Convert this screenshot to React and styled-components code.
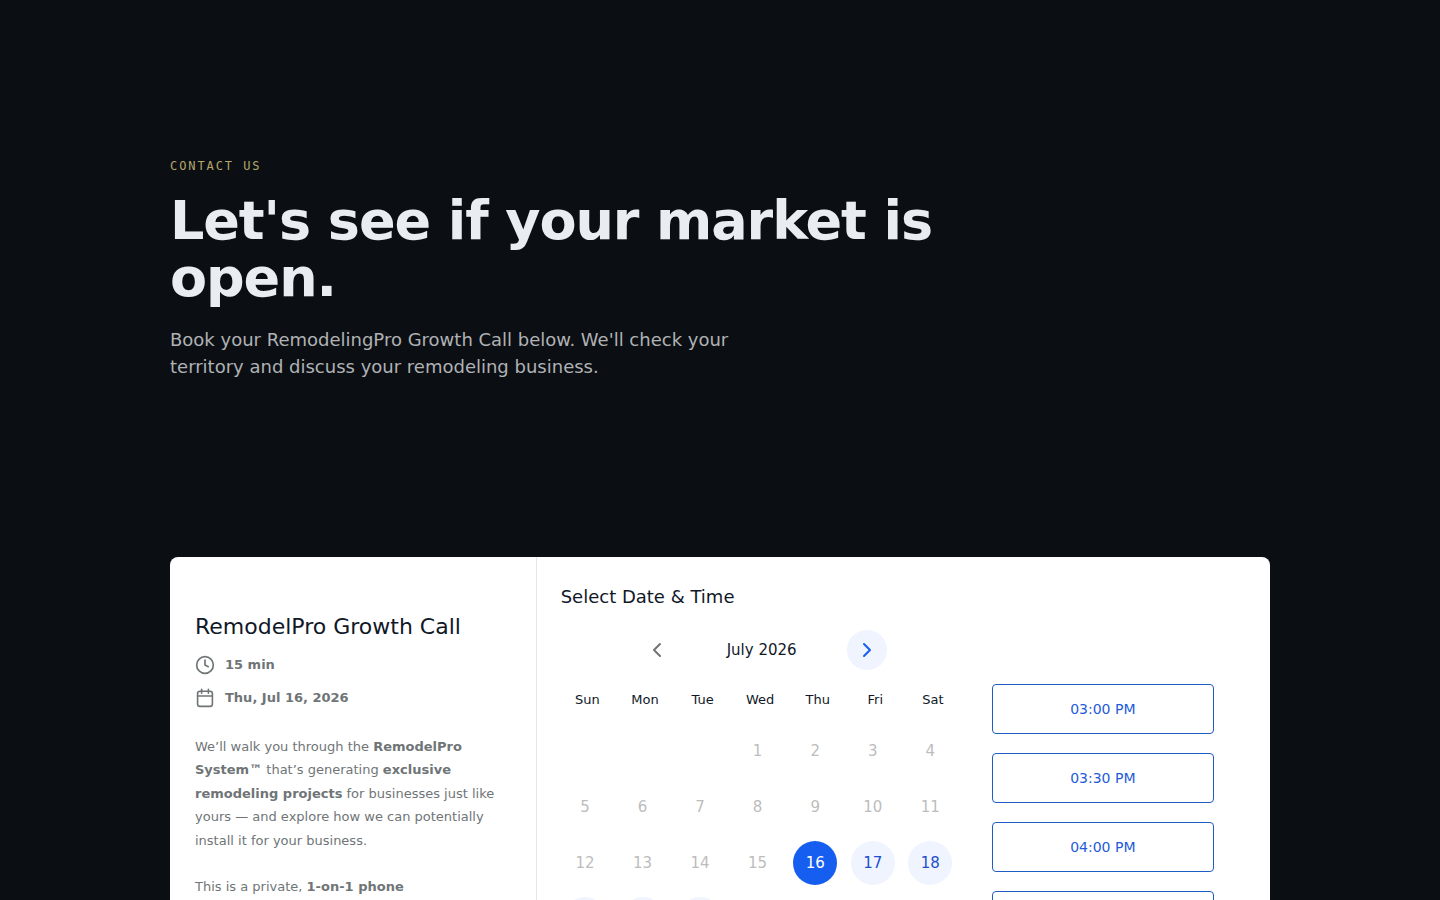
import { useState } from "react"
import styled, { createGlobalStyle } from "styled-components"
import { Clock, ChevronLeft, ChevronRight } from "lucide-react"

const weekdays = ["Sun", "Mon", "Tue", "Wed", "Thu", "Fri", "Sat"]

const weeks = [
    [null, null, null, 1, 2, 3, 4],
    [5, 6, 7, 8, 9, 10, 11],
    [12, 13, 14, 15, 16, 17, 18],
    [19, 20, 21, 22, 23, 24, 25],
    [26, 27, 28, 29, 30, 31, null],
]

const availableDays = [16, 17, 18, 19, 20, 21]

const times = ["03:00 PM", "03:30 PM", "04:00 PM", "04:30 PM", "05:00 PM"]

export default function Contact() {

    const [selected, setSelected] = useState(16)

    return (
        <Page>
            <GlobalStyle />
            <Hero>
                <Eyebrow>CONTACT US</Eyebrow>
                <Title>Let's see if your market is open.</Title>
                <Lead>
                    Book your RemodelingPro Growth Call below. We'll check your
                    territory and discuss your remodeling business.
                </Lead>
            </Hero>

            <Booking>
                <Details>
                    <EventName>RemodelPro Growth Call</EventName>
                    <Meta>
                        <Clock size={20} strokeWidth={2} />
                        15 min
                    </Meta>
                    <Meta>
                        <CalendarIcon />
                        Thu, Jul 16, 2026
                    </Meta>
                    <Description>
                        <p>
                            We’ll walk you through the <strong>RemodelPro System™</strong> that’s
                            generating <strong>exclusive remodeling projects</strong> for businesses
                            just like yours — and explore how we can potentially install it for
                            your business.
                        </p>
                        <p>
                            This is a private, <strong>1-on-1 phone</strong>
                        </p>
                    </Description>
                </Details>

                <Picker>
                    <PickerTitle>Select Date &amp; Time</PickerTitle>
                    <Columns>
                        <div>
                            <MonthBar>
                                <MonthButton aria-label="Previous month">
                                    <ChevronLeft size={24} />
                                </MonthButton>
                                <Month>July 2026</Month>
                                <MonthButton aria-label="Next month" $active>
                                    <ChevronRight size={24} />
                                </MonthButton>
                            </MonthBar>
                            <Days>
                                <thead>
                                    <tr>
                                        {weekdays.map(day => <th key={day} scope="col">{day}</th>)}
                                    </tr>
                                </thead>
                                <tbody>
                                    {weeks.map((week, i) => (
                                        <tr key={i}>
                                            {week.map((day, j) => (
                                                <td key={j}>
                                                    {day && (
                                                        <Day
                                                            disabled={!availableDays.includes(day)}
                                                            $selected={day === selected}
                                                            onClick={() => setSelected(day)}
                                                        >
                                                            {day}
                                                        </Day>
                                                    )}
                                                </td>
                                            ))}
                                        </tr>
                                    ))}
                                </tbody>
                            </Days>
                        </div>
                        <Times>
                            {times.map(time => <Time key={time}>{time}</Time>)}
                        </Times>
                    </Columns>
                </Picker>
            </Booking>
        </Page>
    )
}

function CalendarIcon() {
    return (
        <svg width="20" height="20" viewBox="0 0 20 20" fill="none" stroke="currentColor" strokeWidth="1.6" strokeLinecap="round" strokeLinejoin="round">
            <rect x="2.6" y="3.2" width="14.8" height="15.2" rx="2.4" />
            <path d="M2.6 8h14.8M6.6 1.4v3.8M13.4 1.4v3.8" />
        </svg>
    )
}

const GlobalStyle = createGlobalStyle`
    *{
        box-sizing: border-box;
    }
    body{
        margin: 0;
        background-color: #0b0f13;
        font-family: "DejaVu Sans", sans-serif;
    }
    h1, h2, h3, p{
        margin: 0;
    }
    button{
        font-family: inherit;
        padding: 0;
        cursor: pointer;
    }
`

const Page = styled.main`
    max-width: 1148px;
    margin: 0 auto;
    padding: 156px 24px 96px;
`

const Hero = styled.header`
    padding-bottom: 177px;
`

const Eyebrow = styled.p`
    font-family: "DejaVu Sans Mono", monospace;
    font-size: 12px;
    line-height: 20px;
    letter-spacing: 0.16em;
    color: #b5a66a;
`

const Title = styled.h1`
    max-width: 820px;
    margin-top: 16px;
    font-size: 54px;
    line-height: 57px;
    font-weight: 700;
    letter-spacing: -0.02em;
    color: #e9ecf0;
`

const Lead = styled.p`
    max-width: 560px;
    margin-top: 20px;
    font-size: 18px;
    line-height: 27px;
    color: #b0b2b5;
`

const Booking = styled.section`
    display: grid;
    grid-template-columns: 1fr 2fr;
    border-radius: 8px;
    background-color: #ffffff;
`

const Details = styled.div`
    padding: 53px 24px 40px 25px;
    border-right: 1px solid #e4e7ec;
    color: #6f7577;
`

const EventName = styled.h2`
    margin-bottom: 9px;
    font-size: 22px;
    line-height: 34px;
    font-weight: 400;
    color: #101828;
`

const Meta = styled.p`
    display: flex;
    align-items: center;
    gap: 10px;
    margin-bottom: 10px;
    font-size: 13px;
    line-height: 23px;
    font-weight: 700;
`

const Description = styled.div`
    display: flex;
    flex-direction: column;
    gap: 23px;
    margin-top: 26px;
    font-size: 13px;
    line-height: 1.8;
`

const Picker = styled.div`
    padding: 24px 56px 40px 24px;
`

const PickerTitle = styled.h3`
    font-size: 18px;
    line-height: 32px;
    font-weight: 400;
    color: #101828;
`

const Columns = styled.div`
    display: grid;
    grid-template-columns: 400px 1fr;
    gap: 31px;
    padding-top: 16px;
`

const MonthBar = styled.div`
    display: flex;
    justify-content: center;
    align-items: center;
    gap: 36px;
    height: 42px;
    padding-left: 2px;
`

const MonthButton = styled.button`
    display: flex;
    align-items: center;
    justify-content: center;
    width: 40px;
    height: 40px;
    border: 0;
    border-radius: 50%;
    background-color: ${props => props.$active ? "#eff4fe" : "transparent"};
    color: ${props => props.$active ? "#155eef" : "#6f7577"};
`

const Month = styled.h4`
    width: 98px;
    margin: 0;
    font-size: 15px;
    font-weight: 400;
    text-align: center;
    color: #101828;
`

const Days = styled.table`
    width: 403px;
    margin: 4px 0 0 -2px;
    table-layout: fixed;
    border-collapse: collapse;
    th{
        height: 48px;
        padding: 0;
        font-size: 13px;
        font-weight: 400;
        color: #101828;
    }
    td{
        height: 56px;
        padding: 0 5px 0 0;
        text-align: center;
    }
`

const Day = styled.button`
    display: block;
    width: 44px;
    height: 44px;
    margin: 0 auto;
    border: 0;
    border-radius: 50%;
    font-size: 15px;
    background-color: ${props => props.$selected ? "#155eef" : "#eff4fe"};
    color: ${props => props.$selected ? "#ffffff" : "#1d4fd0"};
    &:disabled{
        background-color: transparent;
        color: #bdbdbd;
        cursor: default;
    }
`

const Times = styled.div`
    display: flex;
    flex-direction: column;
    gap: 19px;
    padding-top: 55px;
`

const Time = styled.button`
    height: 50px;
    border: 1px solid #1f5cc4;
    border-radius: 4px;
    background-color: #ffffff;
    font-size: 14px;
    color: #1f5bd8;
`
